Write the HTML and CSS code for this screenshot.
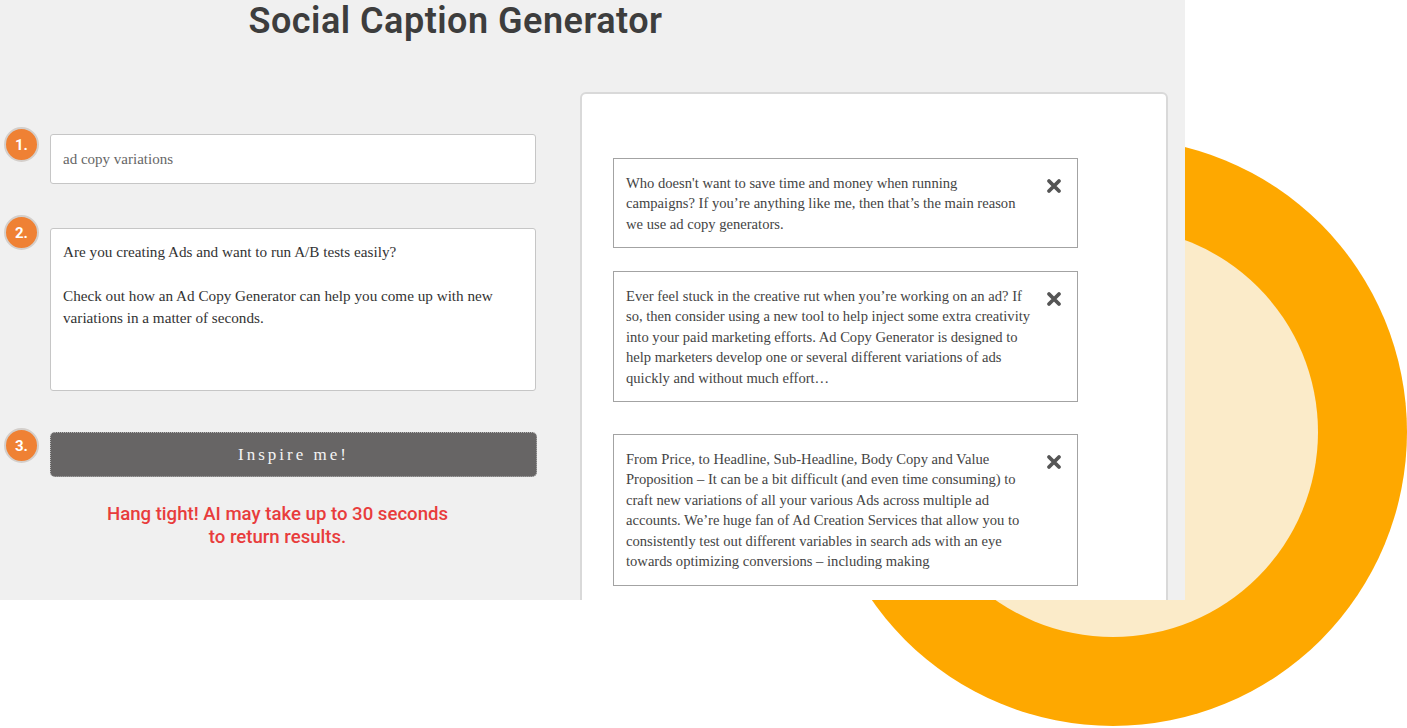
FILE: index.html
```html
<!DOCTYPE html>
<html lang="en">
<head>
<meta charset="utf-8">
<title>Social Caption Generator</title>
<link rel="stylesheet" href="styles.css">
</head>
<body>
<div class="stage">
  <div class="ring"><div class="ring-inner"></div></div>
  <main class="panel">
    <h1 class="title">Social Caption Generator</h1>
    <div class="cols">
      <section class="form-col">
        <div class="step step-1">
          <span class="num">1.</span>
          <div class="field field-input">ad copy variations</div>
        </div>
        <div class="step step-2">
          <span class="num">2.</span>
          <div class="field field-area">
            <p>Are you creating Ads and want to run A/B tests easily?</p>
            <p>Check out how an Ad Copy Generator can help you come up with new<br>variations in a matter of seconds.</p>
          </div>
        </div>
        <div class="step step-3">
          <span class="num">3.</span>
          <button class="btn" type="button">Inspire me!</button>
        </div>
        <p class="notice">Hang tight! AI may take up to 30 seconds<br>to return results.</p>
      </section>
      <section class="results">
        <div class="card card-1">
          <p class="card-text">Who doesn't want to save time and money when running<br>campaigns? If you’re anything like me, then that’s the main reason<br>we use ad copy generators.</p>
          <svg class="close" viewBox="0 0 16 16" aria-hidden="true"><path d="M3 3 L13 13 M13 3 L3 13" stroke="#555" stroke-width="3.8" stroke-linecap="round"/></svg>
        </div>
        <div class="card card-2">
          <p class="card-text">Ever feel stuck in the creative rut when you’re working on an ad? If<br>so, then consider using a new tool to help inject some extra creativity<br>into your paid marketing efforts. Ad Copy Generator is designed to<br>help marketers develop one or several different variations of ads<br>quickly and without much effort…</p>
          <svg class="close" viewBox="0 0 16 16" aria-hidden="true"><path d="M3 3 L13 13 M13 3 L3 13" stroke="#555" stroke-width="3.8" stroke-linecap="round"/></svg>
        </div>
        <div class="card card-3">
          <p class="card-text">From Price, to Headline, Sub-Headline, Body Copy and Value<br>Proposition – It can be a bit difficult (and even time consuming) to<br>craft new variations of all your various Ads across multiple ad<br>accounts. We’re huge fan of Ad Creation Services that allow you to<br>consistently test out different variables in search ads with an eye<br>towards optimizing conversions – including making</p>
          <svg class="close" viewBox="0 0 16 16" aria-hidden="true"><path d="M3 3 L13 13 M13 3 L3 13" stroke="#555" stroke-width="3.8" stroke-linecap="round"/></svg>
        </div>
      </section>
    </div>
  </main>
</div>
</body>
</html>
```

FILE: styles.css
```css
* { box-sizing: border-box; }

html, body {
  margin: 0;
  padding: 0;
  background: #ffffff;
  overflow: hidden;
}

.stage {
  position: relative;
  width: 1407px;
  height: 728px;
}

.ring {
  position: absolute;
  left: 819px;
  top: 138px;
  width: 588px;
  height: 588px;
  border-radius: 50%;
  background: #fea800;
  display: flex;
  align-items: center;
  justify-content: center;
  z-index: 0;
}

.ring-inner {
  width: 410px;
  height: 410px;
  border-radius: 50%;
  background: #fbebc9;
}

.panel {
  position: relative;
  z-index: 1;
  width: 1185px;
  height: 600px;
  background: #f0f0f0;
  overflow: hidden;
}

.title {
  margin: 0;
  width: 911px;
  text-align: center;
  font-family: Roboto, "Liberation Sans", sans-serif;
  font-weight: 600;
  font-size: 36px;
  letter-spacing: 0.5px;
  line-height: 42px;
  color: #3d3d3d;
}

.cols {
  display: flex;
  align-items: flex-start;
  margin-top: 50px;
}

.form-col {
  width: 555px;
  flex: none;
  padding-top: 35px;
  margin-right: 25px;
}

.step {
  display: flex;
  align-items: flex-start;
  padding-left: 4px;
  gap: 11px;
}

.num {
  flex: none;
  width: 35px;
  height: 35px;
  border-radius: 50%;
  background: #ef8134;
  border: 2px solid #d4cfcb;
  color: #ffffff;
  font-family: Roboto, "Liberation Sans", sans-serif;
  font-weight: 700;
  font-size: 15px;
  display: flex;
  align-items: center;
  justify-content: center;
}

.field {
  width: 486px;
  background: #ffffff;
  border: 1px solid #c6c6c6;
  border-radius: 3px;
  font-family: "Liberation Serif", "DejaVu Serif", serif;
}

.field-input {
  margin-top: 7px;
  height: 50px;
  padding: 0 12px;
  display: flex;
  align-items: center;
  font-size: 15px;
  color: #666666;
}

.step-2 { margin-top: 31px; }

.field-area {
  margin-top: 13px;
  height: 163px;
  padding: 12px 12px;
  font-size: 15.2px;
  line-height: 22px;
  color: #333333;
}

.field-area p {
  margin: 0 0 22px;
  white-space: nowrap;
}

.step-3 { margin-top: 37px; }

.btn {
  margin-top: 4px;
  width: 487px;
  height: 45px;
  background: #676565;
  border: 1px dotted #b5b5b5;
  border-radius: 5px;
  color: #f4f4f4;
  font-family: "Liberation Serif", "DejaVu Serif", serif;
  font-size: 17px;
  letter-spacing: 3px;
  padding: 0;
}

.notice {
  margin: 26px 0 0;
  text-align: center;
  font-family: Roboto, "Liberation Sans", sans-serif;
  font-weight: 500;
  font-size: 18.6px;
  line-height: 23px;
  color: #e83c3c;
}

.results {
  flex: none;
  width: 588px;
  height: 600px;
  background: #ffffff;
  border: 2px solid #d9d9d9;
  border-radius: 6px;
  padding: 64px 0 0 31px;
}

.card {
  width: 465px;
  border: 1px solid #a3a3a3;
  display: flex;
  align-items: flex-start;
  padding: 13.5px 15px 13px 12px;
}

.card-1 { margin-bottom: 23px; }
.card-2 { margin-bottom: 32px; }

.card-text {
  margin: 0;
  flex: 1;
  white-space: nowrap;
  font-family: "Liberation Serif", "DejaVu Serif", serif;
  font-size: 14.6px;
  line-height: 20.5px;
  color: #444444;
}

.close {
  flex: none;
  width: 16px;
  height: 16px;
  margin-top: 5px;
}
```
